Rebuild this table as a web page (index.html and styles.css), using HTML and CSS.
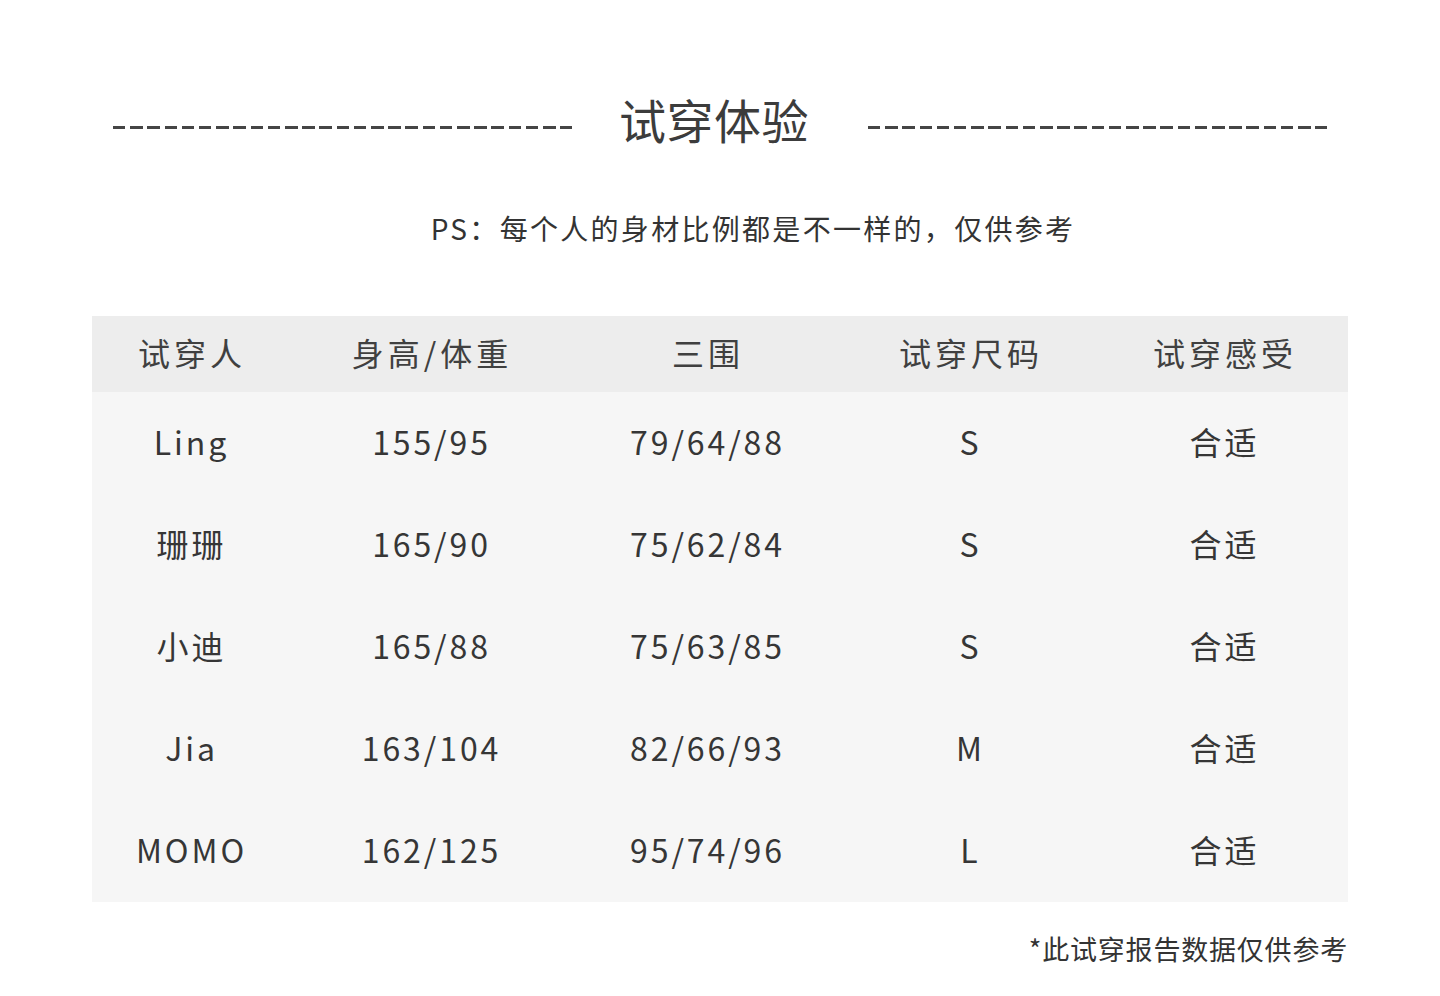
FILE: index.html
```html
<!DOCTYPE html>
<html lang="zh-CN">
<head>
<meta charset="utf-8">
<title>试穿体验</title>
<link rel="stylesheet" href="styles.css">
</head>
<body>
<div class="page">
  <div class="title-row">
    <div class="dash"></div>
    <h1 class="title">试穿体验</h1>
    <div class="dash"></div>
  </div>
  <p class="note">PS：每个人的身材比例都是不一样的，仅供参考</p>
  <div class="table">
    <div class="row head">
      <div>试穿人</div><div>身高/体重</div><div>三围</div><div>试穿尺码</div><div>试穿感受</div>
    </div>
    <div class="row">
      <div>Ling</div><div>155/95</div><div>79/64/88</div><div>S</div><div>合适</div>
    </div>
    <div class="row">
      <div>珊珊</div><div>165/90</div><div>75/62/84</div><div>S</div><div>合适</div>
    </div>
    <div class="row">
      <div>小迪</div><div>165/88</div><div>75/63/85</div><div>S</div><div>合适</div>
    </div>
    <div class="row">
      <div>Jia</div><div>163/104</div><div>82/66/93</div><div>M</div><div>合适</div>
    </div>
    <div class="row">
      <div>MOMO</div><div>162/125</div><div>95/74/96</div><div>L</div><div>合适</div>
    </div>
  </div>
  <p class="footer">*此试穿报告数据仅供参考</p>
</div>
</body>
</html>
```
FILE: styles.css
```css
html, body {
  margin: 0;
  padding: 0;
  background: #ffffff;
}
body {
  font-family: "Noto Sans CJK SC", "Noto Sans", sans-serif;
  color: #3a3a3a;
}
.page {
  width: 1440px;
  padding-top: 87px;
}
.title-row {
  display: grid;
  grid-template-columns: 459px 296px 459px;
  justify-content: center;
  align-items: center;
  height: 64px;
}
.dash {
  height: 3px;
  margin-top: 16px;
  background-image: repeating-linear-gradient(to right, #454545 0, #454545 12.5px, transparent 12.5px, transparent 17.2px);
}
.title {
  margin: 0;
  padding-right: 12px;
  text-align: center;
  font-size: 47px;
  font-weight: 400;
  line-height: 64px;
  letter-spacing: 0.5px;
  color: #3c3c3c;
}
.note {
  margin: 57px 0 0;
  padding-left: 66px;
  text-align: center;
  font-size: 28px;
  line-height: 40px;
  letter-spacing: 2.3px;
  color: #333333;
}
.table {
  width: 1256px;
  margin: 68px auto 0;
  background: #f6f6f6;
}
.row {
  display: grid;
  grid-template-columns: 196px 284px 268px 258px 250px;
  height: 102px;
  align-items: center;
  text-align: center;
  font-size: 32px;
  letter-spacing: 2.9px;
  color: #363636;
}
.row > div {
  padding-left: 3px;
  padding-bottom: 4px;
}
.row.head {
  height: 76px;
  background: #ededed;
  color: #404040;
  letter-spacing: 4px;
}
.row.head > div {
  padding-left: 4px;
}
.footer {
  width: 1256px;
  margin: 28px auto 0;
  text-align: right;
  font-size: 27px;
  line-height: 38px;
  letter-spacing: 0.8px;
  color: #333333;
}
```
